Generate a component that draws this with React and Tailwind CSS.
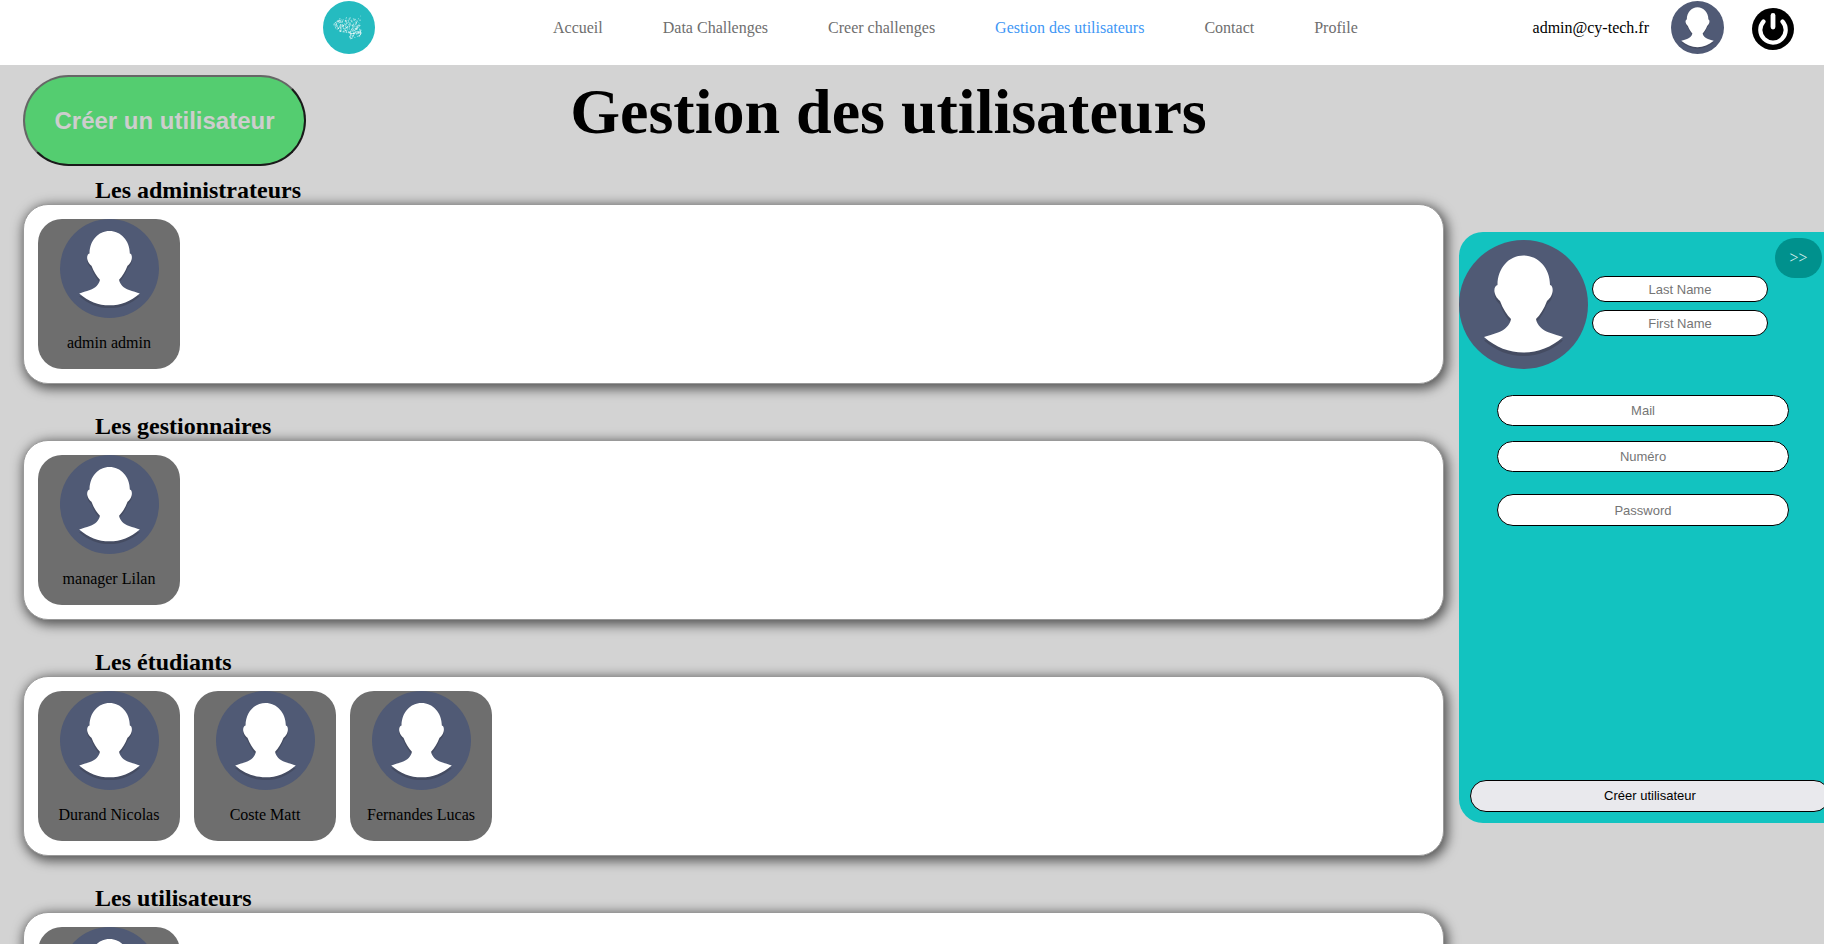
import React from "react";

const NAV = [
  ["Accueil", false],
  ["Data Challenges", false],
  ["Creer challenges", false],
  ["Gestion des utilisateurs", true],
  ["Contact", false],
  ["Profile", false],
];

const GROUPS = [
  ["Les administrateurs", ["admin admin"]],
  ["Les gestionnaires", ["manager Lilan"]],
  ["Les étudiants", ["Durand Nicolas", "Coste Matt", "Fernandes Lucas"]],
  ["Les utilisateurs", [""]],
];

const BUST =
  "M64.5 15.500C50 15.500 38.500 28 38.500 45C36 45.500 35 49 35.500 52C36.500 57 39 59 41 61C44 69 48 75 52 79C51 85 46 90 39 92.500C34 94.500 29 95.500 25 97C37 107.500 50 112.500 64.500 112.500C79 112.500 92 107.500 104 97C100 95.500 95 94.500 90 92.500C83 90 78 85 77 79C81 75 85 69 88 61C90 59 92.500 57 93.500 52C94 49 93.500 45.500 91 45C91 28 79 15.500 64.500 15.500Z";

function Avatar({ className }) {
  return (
    <svg viewBox="0 0 129 129" className={className} role="img" aria-label="Avatar">
      <circle cx="64.5" cy="64.5" r="64.5" fill="#505a75" />
      <path d={BUST} fill="#454c62" transform="translate(0 3.500)" />
      <path d={BUST} fill="#fff" />
    </svg>
  );
}

/* Deterministic scatter of dots inside the outline of a brain. */
const DOTS = (() => {
  let seed = 7;
  const rnd = () => {
    seed = (seed * 16807) % 2147483647;
    return seed / 2147483647;
  };
  const out = [];
  while (out.length < 340) {
    const x = 11 + rnd() * 29;
    const y = 15 + rnd() * 24;
    const main = ((x - 24) / 13) ** 2 + ((y - 24) / 7.5) ** 2 < 1;
    const back = ((x - 32) / 6.5) ** 2 + ((y - 31) / 5.5) ** 2 < 1;
    const stem = Math.abs(x - 28) < 1.2 && y > 32 && y < 39;
    const spray = x > 30 && y < 22 && rnd() < 0.25;
    if (main || back || stem || spray) out.push([x, y, 0.25 + rnd() * 0.4]);
  }
  return out;
})();

function Logo() {
  return (
    <svg viewBox="0 0 52 53" className="h-[53px] w-[52px]" role="img" aria-label="Logo">
      <ellipse cx="26" cy="26.500" rx="26" ry="26.500" fill="#25bbc0" />
      {DOTS.map(([x, y, r], i) => (
        <circle key={i} cx={x} cy={y} r={r} fill="#fff" fillOpacity="0.7" />
      ))}
    </svg>
  );
}

function Power() {
  return (
    <svg viewBox="0 0 42 42" className="size-[42px]" aria-hidden="true">
      <circle cx="21" cy="21" r="21" fill="#000" />
      <path d="M11.500 13.500A12.700 12.700 0 1 0 30.500 13.500" fill="none" stroke="#fff" strokeWidth="4.200" strokeLinecap="round" />
      <path d="M21 7.500V19" stroke="#fff" strokeWidth="4.800" strokeLinecap="round" />
    </svg>
  );
}

function Field({ label, type = "text", className }) {
  return (
    <input
      type={type}
      aria-label={label}
      placeholder={label}
      className={
        "rounded-full border border-black bg-white text-center font-['Liberation_Sans',sans-serif] text-[13px] placeholder:text-[#757575] " +
        className
      }
    />
  );
}

function Group({ title, members }) {
  return (
    <section>
      <h2 className="ml-[72px] h-[29px] text-2xl leading-[30px] font-bold">{title}</h2>
      <ul className="flex h-[180px] gap-3.5 rounded-[25px] border border-[#999] bg-white p-3.5 shadow-[2px_3px_12px_2px_rgba(0,0,0,0.6)]">
        {members.map((name) => (
          <li key={name} className="flex w-[142px] flex-col items-center rounded-3xl bg-[#6e6e6e]">
            <Avatar className="size-[99px] shrink-0" />
            <p className="mt-4 leading-[18px]">{name}</p>
          </li>
        ))}
      </ul>
    </section>
  );
}

export default function App() {
  return (
    <div className="min-h-screen overflow-x-clip bg-[#d3d3d3] font-['Liberation_Serif',serif] text-base text-black">
      <header className="flex h-[65px] items-start bg-white pt-px pr-[30px] pl-[323px]">
        <Logo />
        <nav className="ml-[178px] flex h-[53px] items-center gap-[60px]">
          {NAV.map(([label, active]) => (
            <a key={label} href="#" className={active ? "text-[#3f97f5]" : "text-[#6e6e6e]"}>
              {label}
            </a>
          ))}
        </nav>
        <div className="ml-auto flex h-[53px] items-center">
          <span>admin@cy-tech.fr</span>
          <Avatar className="ml-[22px] size-[53px]" />
          <button type="button" aria-label="Déconnexion" className="mt-0.5 ml-7">
            <Power />
          </button>
        </div>
      </header>

      <div className="grid grid-cols-[283px_1fr_353px] pt-2.5 pl-[23px]">
        <button
          type="button"
          className="h-[91px] rounded-full border-2 border-t-[#666] border-r-[#1a1a1a] border-b-[#1a1a1a] border-l-[#666] bg-[#54cd70] font-['Liberation_Sans',sans-serif] text-2xl font-bold text-[#cdcdcd]"
        >
          Créer un utilisateur
        </button>
        <h1 className="text-center text-[64px] leading-[74px] font-bold">Gestion des utilisateurs</h1>
      </div>

      <div className="flex items-start">
        <main className="mt-[9px] ml-[23px] flex min-w-0 flex-1 flex-col gap-[27px]">
          {GROUPS.map(([title, members]) => (
            <Group key={title} title={title} members={members} />
          ))}
        </main>

        <aside className="mt-[66px] ml-[15px] w-[365px] shrink-0 rounded-l-3xl bg-[#12c3c0]">
          <form className="flex h-[591px] flex-col pt-2 pb-[11px]">
            <div className="flex items-start">
              <Avatar className="size-[129px] shrink-0" />
              <div className="mt-9 ml-1 flex w-[176px] flex-col gap-2">
                <Field label="Last Name" className="h-[26px]" />
                <Field label="First Name" className="h-[26px]" />
              </div>
              <button type="button" className="-mt-0.5 mr-0.5 ml-auto h-10 w-[47px] rounded-[20px] bg-[#00918d] text-[#d3eeee]">
                &gt;&gt;
              </button>
            </div>
            <div className="mr-[35px] ml-[38px] flex flex-col pt-[26px]">
              <Field label="Mail" type="email" className="h-[31px]" />
              <Field label="Numéro" type="tel" className="mt-[15px] h-[31px]" />
              <Field label="Password" type="password" className="mt-[22px] h-8" />
            </div>
            <button
              type="submit"
              className="mt-auto ml-[11px] h-8 w-[360px] rounded-full border border-black bg-[#e9e9ed] font-['Liberation_Sans',sans-serif] text-[13px]"
            >
              Créer utilisateur
            </button>
          </form>
        </aside>
      </div>
    </div>
  );
}
